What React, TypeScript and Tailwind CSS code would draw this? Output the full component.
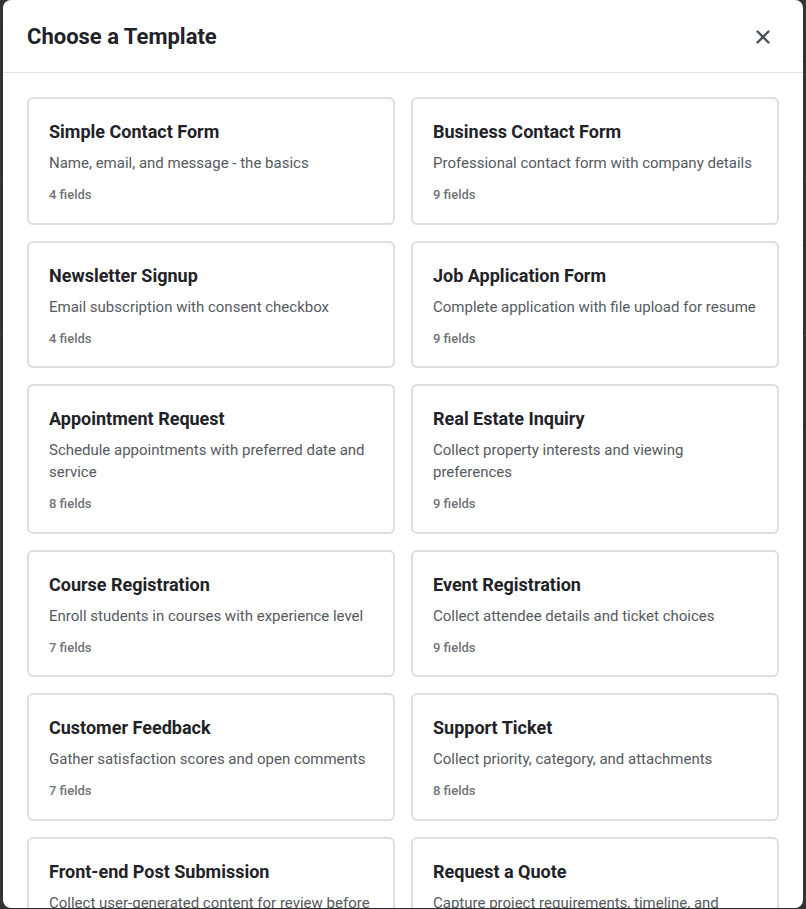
import { X } from "lucide-react";

const templates = [
  { name: "Simple Contact Form", desc: "Name, email, and message - the basics", fields: 4 },
  { name: "Business Contact Form", desc: "Professional contact form with company details", fields: 9 },
  { name: "Newsletter Signup", desc: "Email subscription with consent checkbox", fields: 4 },
  { name: "Job Application Form", desc: "Complete application with file upload for resume", fields: 9 },
  { name: "Appointment Request", desc: "Schedule appointments with preferred date and service", fields: 8 },
  { name: "Real Estate Inquiry", desc: "Collect property interests and viewing preferences", fields: 9 },
  { name: "Course Registration", desc: "Enroll students in courses with experience level", fields: 7 },
  { name: "Event Registration", desc: "Collect attendee details and ticket choices", fields: 9 },
  { name: "Customer Feedback", desc: "Gather satisfaction scores and open comments", fields: 7 },
  { name: "Support Ticket", desc: "Collect priority, category, and attachments", fields: 8 },
  { name: "Front-end Post Submission", desc: "Collect user-generated content for review before publishing", fields: 6 },
  { name: "Request a Quote", desc: "Capture project requirements, timeline, and budget", fields: 8 },
];

export default function App() {
  return (
    <div
      className="relative w-screen h-screen overflow-hidden bg-[#353535]"
      style={{ fontFamily: "Roboto, 'Liberation Sans', sans-serif" }}
    >
      {/* page behind the overlay */}
      <div className="absolute inset-0 flex flex-col">
        <div className="h-[62px] border-b border-[#2a2a2a]" />
        <div className="h-[120px] border-b border-[#404040]" />
        <div className="h-[64px] border-b border-[#2a2a2a]" />
        <div className="h-[90px] border-b border-[#404040]" />
        <div className="h-[90px] border-b border-[#2a2a2a]" />
      </div>

      <div className="absolute left-[3px] top-0 w-[800px] h-[908px] bg-white rounded-lg overflow-hidden flex flex-col shadow-xl">
        <div className="h-[73px] shrink-0 flex items-center justify-between px-6 border-b border-[#e2e2e2]">
          <h2 className="text-[22px] leading-7 font-bold text-[#1f2328] mt-px">Choose a Template</h2>
          <button className="w-8 h-8 flex items-center justify-center text-[#4b5056] mt-px">
            <X size={22} strokeWidth={2.6} />
          </button>
        </div>

        <div className="flex-1 overflow-hidden px-6 pt-6">
          <div className="grid grid-cols-2 gap-4">
            {templates.map((t) => (
              <div
                key={t.name}
                className="border-2 border-[#dedede] rounded-md px-5 pt-[21px] pb-[18.5px] bg-white"
              >
                <h3 className="text-[18px] leading-6 font-bold text-[#1f2328]">{t.name}</h3>
                <p className="mt-2 text-[15px] leading-[22px] text-[#555a60]">{t.desc}</p>
                <p className="mt-3 text-[13px] leading-[18px] font-medium text-[#6f747a]">
                  {t.fields} fields
                </p>
              </div>
            ))}
          </div>
        </div>
      </div>
    </div>
  );
}
